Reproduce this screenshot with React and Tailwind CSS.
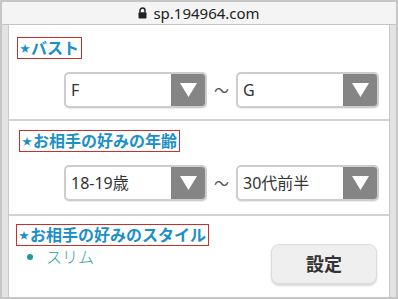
const FONT = { fontFamily: '"Noto Sans", "Noto Sans CJK JP", sans-serif' }

function Title({ children }) {
  return (
    <div className="inline-flex items-center h-[22px] border border-[#c8302c] pl-[2px] pr-[2px]">
      <span className="text-[10px] font-bold leading-none text-[#1b8fc9] mr-[1px]">★</span>
      <span className="text-[16px] font-bold leading-none text-[#1b8fc9]">{children}</span>
    </div>
  )
}

function Select({ value }) {
  return (
    <div className="flex w-[143px] h-[36px] rounded-[5px] border-2 border-[#cdcdcd] bg-white overflow-hidden shadow-[0_1px_1px_rgba(0,0,0,0.08)]">
      <div className="flex-1 flex items-center pl-[5px] text-[16px] text-[#333]">{value}</div>
      <div className="w-[34px] bg-[#858585] flex items-center justify-center">
        <svg width="17" height="14" viewBox="0 0 17 14"><polygon points="0,0 17,0 8.5,14" fill="#fff" /></svg>
      </div>
    </div>
  )
}

function Range({ from, to }) {
  return (
    <div className="flex items-center justify-end pr-[10px] gap-[6px]">
      <Select value={from} />
      <span className="text-[15px] text-[#555] w-[17px] text-center">〜</span>
      <Select value={to} />
    </div>
  )
}

export default function App() {
  return (
    <div className="w-[398px] h-[299px] bg-[#c6c6c6] p-[2px] flex flex-col overflow-hidden" style={FONT}>
      <div className="h-[23px] bg-[#f4f4f4] flex items-center justify-center gap-[6px] text-[15px] text-[#222] border-b border-[#c4c4c4]">
        <svg width="9" height="12" viewBox="0 0 9 12">
          <path d="M2 5.5V3.6a2.5 2.5 0 0 1 5 0v1.9" fill="none" stroke="#222" strokeWidth="1.5" />
          <rect x="0.5" y="5.2" width="8" height="6.3" rx="1" fill="#222" />
        </svg>
        <span>sp.194964.com</span>
      </div>
      <div className="flex-1 bg-[#e3e3e3] px-[6px] flex flex-col">
        <div className="flex-1 bg-white border-x border-[#c9c9c9] flex flex-col">
          <div className="h-[96px] pt-[9px] pl-[8px] border-b-2 border-[#d2d2d2]">
            <Title>バスト</Title>
            <div className="mt-[13px]"><Range from="F" to="G" /></div>
          </div>
          <div className="h-[95px] pt-[6px] pl-[10px] border-b-2 border-[#d2d2d2]">
            <Title>お相手の好みの年齢</Title>
            <div className="mt-[13px]"><Range from="18-19歳" to="30代前半" /></div>
          </div>
          <div className="flex-1 flex pl-[7px] pr-[12px] pt-[5px]">
            <div className="flex-1 flex flex-col">
              <div><Title>お相手の好みのスタイル</Title></div>
              <div className="flex items-center pl-[11px] mt-[-1px] text-[#27a3a0] text-[16px] font-light">
                <span className="w-[6px] h-[6px] rounded-full bg-[#1f9b98]"></span>
                <span className="ml-[13px]">スリム</span>
              </div>
            </div>
            <button className="mt-[23px] w-[106px] h-[40px] rounded-[8px] bg-[#efefef] border border-[#dcdcdc] shadow-[0_2px_2px_rgba(0,0,0,0.15)] text-[18px] font-bold text-[#333]">設定</button>
          </div>
        </div>
      </div>
    </div>
  )
}
